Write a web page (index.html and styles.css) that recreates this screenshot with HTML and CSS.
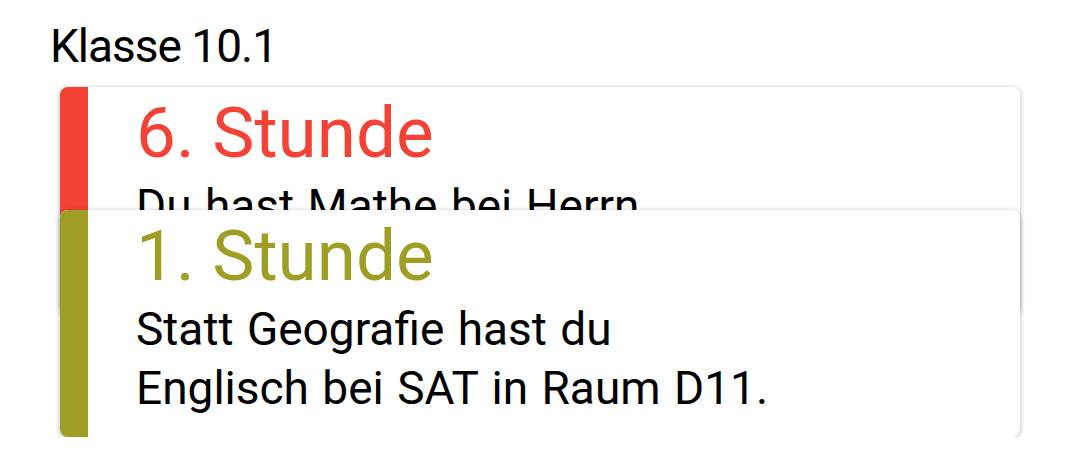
FILE: index.html
```html
<!DOCTYPE html>
<html lang="de">
<head>
<meta charset="utf-8">
<title>Klasse 10.1</title>
<link rel="stylesheet" href="styles.css">
</head>
<body>
<main class="screen">
  <h1 class="class-name">Klasse 10.1</h1>
  <section class="stack">
    <article class="card card-red">
      <div class="stripe"></div>
      <div class="card-body">
        <h2 class="lesson">6. Stunde</h2>
        <p class="message">Du hast Mathe bei Herrn</p>
      </div>
    </article>
    <article class="card card-olive card-front">
      <div class="stripe"></div>
      <div class="card-body">
        <h2 class="lesson">1. Stunde</h2>
        <p class="message">Statt Geografie hast du<br>Englisch bei SAT in Raum D11.</p>
      </div>
    </article>
  </section>
</main>
</body>
</html>
```

FILE: styles.css
```css
html, body {
  margin: 0;
  padding: 0;
  background: #ffffff;
}

body {
  font-family: Roboto, "Noto Sans", sans-serif;
  color: #000000;
}

.screen {
  padding: 19px 60px 0 60px;
}

.class-name {
  margin: 0 0 13px -10px;
  font-size: 46px;
  line-height: 55px;
  font-weight: 400;
  letter-spacing: -1px;
}

.stack {
  display: flex;
  flex-direction: column;
}

.card {
  display: flex;
  min-height: 227px;
  background: #ffffff;
  border-radius: 8px;
  overflow: hidden;
  box-shadow: 0 1px 5px rgba(0, 0, 0, 0.3);
  position: relative;
}

.card-front {
  margin-top: -104px;
}

.stripe {
  width: 28px;
  flex: none;
}

.card-red .stripe { background: #f44336; }
.card-olive .stripe { background: #9e9d24; }

.card-body {
  padding: 4px 20px 19px 48px;
}

.lesson {
  margin: 0 0 3px 0;
  font-size: 71px;
  line-height: 83px;
  font-weight: 400;
}

.card-red .lesson { color: #f44336; }
.card-olive .lesson { color: #9e9d24; }

.message {
  margin: 0;
  font-size: 46px;
  line-height: 59px;
  word-spacing: 2px;
}
```
